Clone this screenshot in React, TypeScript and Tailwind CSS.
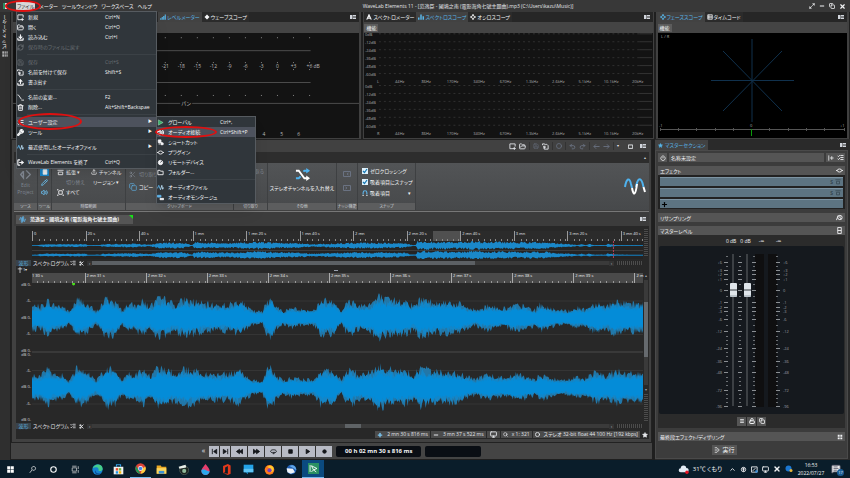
import React from "react";
import {
  AudioWaveform,
  ChevronUp,
  Circle,
  Copy,
  Download,
  FolderOpen,
  ListChecks,
  LockOpen,
  LogOut,
  Maximize2,
  MessageSquareText,
  Minus,
  Monitor,
  Pencil,
  Plus,
  Power,
  Redo2,
  RefreshCw,
  Save,
  Scissors,
  Search,
  Star,
  Trash2,
  Undo2,
  Upload,
  Volume2,
  Wrench,
  X,
} from "lucide-react";

type Point = [number, number];

// small seeded noise so that the wave looks the same on every render
function makeNoise(seed: number) {
  let s = seed;
  return () => {
    s = (s * 1103515245 + 12345) % 2147483648;
    return s / 2147483648;
  };
}

function levelAt(points: Point[], x: number) {
  for (let i = 1; i < points.length; i++) {
    if (x <= points[i][0]) {
      const [x0, y0] = points[i - 1];
      const [x1, y1] = points[i];
      return y0 + ((y1 - y0) * (x - x0)) / (x1 - x0 || 1);
    }
  }
  return points[points.length - 1][1];
}

function wavePath(points: Point[], center: number, seed: number, min: number, spread: number) {
  const rnd = makeNoise(seed);
  const top: string[] = [];
  const bottom: string[] = [];
  for (let x = 0; x <= 610; x++) {
    const a = levelAt(points, x);
    top.push(`${x},${(center - a * (min + rnd() * spread)).toFixed(1)}`);
    bottom.push(`${x},${(center + a * (min + rnd() * spread)).toFixed(1)}`);
  }
  return `M${top.join("L")}L${bottom.reverse().join("L")}Z`;
}

const mainLevels: Point[] = [
  [0, 12], [9, 12], [15, 18], [22, 13], [31, 12], [37, 6], [40, 10], [44, 19], [50, 17], [58, 12], [64, 6], [68, 12],
  [74, 20], [83, 17], [90, 7], [95, 14], [103, 13], [111, 17], [118, 12], [125, 19], [133, 19], [142, 14], [153, 19],
  [162, 17], [172, 14], [183, 13], [198, 14], [207, 18], [214, 11], [221, 7], [230, 6], [235, 19], [240, 20],
  [245, 10], [252, 7], [259, 10], [270, 8], [282, 8], [288, 18], [300, 17], [303, 15], [309, 6], [313, 14], [319, 18],
  [326, 13], [338, 15], [346, 22], [354, 18], [364, 18], [375, 17], [381, 12], [388, 20], [398, 17], [408, 16],
  [418, 16], [428, 14], [436, 10], [443, 8], [455, 13], [464, 10], [475, 10], [482, 13], [490, 12], [503, 8],
  [507, 14], [518, 9], [533, 7], [543, 10], [553, 9], [563, 16], [573, 12], [583, 17], [593, 14], [610, 15],
];

const overviewLevels: Point[] = [
  [0, 0.3], [6, 0.4], [8, 1.4], [54, 1.4], [56, 0.3], [68, 0.4], [70, 1.3], [100, 2], [118, 1], [128, 3], [150, 3],
  [158, 1], [160, 0.4], [162, 3.2], [200, 2.6], [225, 4], [240, 3], [270, 2.2], [280, 1.2], [297, 2], [330, 3],
  [372, 2.4], [380, 0.5], [383, 0.5], [385, 4.4], [420, 3.4], [440, 4.2], [480, 3.4], [510, 3.6], [525, 2], [540, 1.4],
  [545, 0.4], [548, 1.6], [553, 0.4], [556, 1.7], [561, 0.4], [573, 0.4], [575, 1.8], [584, 0.4], [610, 0.3],
];

const fileMenu: (null | { label: string; keys?: string; icon: React.ReactNode; off?: boolean; sub?: boolean; hot?: boolean })[] = [
  { label: "新規", keys: "Ctrl+N", icon: <NewIcon /> },
  { label: "開く", keys: "Ctrl+O", icon: <FolderOpen size={7} strokeWidth={3} /> },
  { label: "読み込む", keys: "Ctrl+I", icon: <Download size={7} strokeWidth={4} /> },
  { label: "保存時のファイルに戻す", icon: <RefreshCw size={7} strokeWidth={3} />, off: true },
  null,
  { label: "保存", keys: "Ctrl+S", icon: <Save size={7} strokeWidth={2} />, off: true },
  { label: "名前を付けて保存", keys: "Shift+S", icon: <SaveAsIcon /> },
  { label: "書き出す", icon: <Upload size={7} strokeWidth={4} /> },
  null,
  { label: "名前の変更...", keys: "F2", icon: <RenameIcon /> },
  { label: "削除...", keys: "Alt+Shift+Backspae", icon: <Trash2 size={7} strokeWidth={3} /> },
  null,
  { label: "ユーザー設定", icon: <ListChecks size={7} strokeWidth={3} />, sub: true, hot: true },
  { label: "ツール", icon: <Wrench size={7} strokeWidth={4} />, sub: true },
  null,
  { label: "最近使用したオーディオファイル", icon: <WaveIcon />, sub: true },
  null,
  { label: "WaveLab Elements を終了", keys: "Ctrl+Q", icon: <LogOut size={7} strokeWidth={4} /> },
];

const settingsMenu: typeof fileMenu = [
  { label: "グローバル", keys: "Ctrl+,", icon: <PlayIcon /> },
  { label: "オーディオ接続", keys: "Ctrl+Shift+P", icon: <Volume2 size={7} strokeWidth={4} />, hot: true },
  { label: "ショートカット", icon: <KeyIcon /> },
  { label: "プラグイン", icon: <PlugIcon /> },
  { label: "リモートデバイス", icon: <KnobIcon /> },
  { label: "フォルダー...", icon: <FolderIcon /> },
  null,
  { label: "オーディオファイル", icon: <WaveIcon /> },
  { label: "オーディオモンタージュ", icon: <MontageIcon /> },
];

function Svg({ size = 7, children, className = "" }: { size?: number; children: React.ReactNode; className?: string }) {
  return (
    <svg width={size} height={size} viewBox="0 0 16 16" fill="none" stroke="currentColor" strokeWidth="2" className={`shrink-0 ${className}`}>
      {children}
    </svg>
  );
}

function NewIcon() {
  return <Svg><path d="M9 13H2V2h12v6M12 9v7M8.500 12.500h7" /></Svg>;
}
function SaveAsIcon() {
  return <Svg><path d="M1 2h5l2 3M1 2v3M5 6v8h9V6l-3-3H8M3 7l4 4M7 7v4H3" /></Svg>;
}
function RenameIcon() {
  return <Svg><path d="M1 2l3 1 6 9M10 14h6" /></Svg>;
}
function WaveIcon() {
  return <Svg><path d="M1 10L4 3l4 10" stroke="#5fb4ea" /><path d="M8 13l3-10 2 9 2-4" stroke="#b9dcf2" /></Svg>;
}
function PlayIcon() {
  return <Svg><path d="M3 2l11 6-11 6z" fill="#3bb36a" stroke="#bfe8cf" strokeWidth="1" /></Svg>;
}
function KeyIcon() {
  return <Svg><path d="M3 2h6v6H3zM5 8v5M9 8l5 1v4H9z" fill="currentColor" /></Svg>;
}
function PlugIcon() {
  return <Svg><path d="M0 8h3M13 8h3" /><ellipse cx="8" cy="8" rx="5" ry="3.500" /></Svg>;
}
function KnobIcon() {
  return <Svg><circle cx="8" cy="8" r="5" fill="currentColor" /><path d="M8 8l5-6" stroke="#30363b" /></Svg>;
}
function FolderIcon() {
  return <Svg><path d="M2 13V3h5l1 2h6v8z" /></Svg>;
}
function MontageIcon() {
  return <Svg><path d="M1 3h8v4H1z" fill="#5fb4ea" stroke="#5fb4ea" /><path d="M7 10h8v3H7z" fill="currentColor" /></Svg>;
}
function BarsIcon() {
  return <Svg size={6}><path d="M2 15v-4M6 15V8M10 15V5M14 15V1" strokeWidth="3" /></Svg>;
}
function ScopeIcon() {
  return <Svg size={6}><path d="M8 0v5M8 11v5M0 8h5M11 8h5" strokeWidth="3" /><circle cx="8" cy="8" r="4" /></Svg>;
}
function DotIcon() {
  return <Svg size={6}><path d="M8 2v12M2 8h12" strokeWidth="3" /><circle cx="8" cy="8" r="4" fill="currentColor" /></Svg>;
}
function PeakIcon() {
  return <Svg size={6}><path d="M2 15L8 2l6 13M5 11h6" strokeWidth="3" /></Svg>;
}
function SpectrumIcon() {
  return <Svg size={6}><path d="M2 15V9M8 15V1M14 15V6" strokeWidth="4" /></Svg>;
}
function FilmIcon() {
  return <Svg size={6}><path d="M2 2h12v12H2zM2 6h12M2 10h12M5 2v12" /></Svg>;
}
function PanelMenuIcon() {
  return (
    <button aria-label="パネルメニュー" className="text-gray-300">
      <svg width="6" height="4" viewBox="0 0 12 8" fill="currentColor"><path d="M0 0h5v8H0zM6 0h6v2H6zM6 3h6v2H6zM6 6h6v2H6z" /></svg>
    </button>
  );
}

function Menu({ items, keyCol }: { items: typeof fileMenu; keyCol: string }) {
  return (
    <ul className="border border-[#565b60] bg-[#30363b] pb-px text-[5px] leading-[10px] text-gray-100 shadow-lg">
      {items.map((it, i) =>
        it === null ? (
          <li key={i} className="flex h-[5px] items-center pl-[10px]"><span className="h-px w-full bg-[#3b4146]" /></li>
        ) : (
          <li key={i}>
            <button className={`flex h-[10px] w-full items-center ${it.hot ? "bg-[#4d525d]" : ""} ${it.off ? "text-[#6a6f73]" : ""}`}>
              <span className="flex w-[11px] items-center justify-start">{it.icon}</span>
              <span className="flex-1 whitespace-nowrap text-left">{it.label}</span>
              <span className={`whitespace-nowrap text-left ${it.keys || !it.sub ? keyCol : ""}`}>{it.keys}</span>
              {it.sub && <span className="pr-1 text-[4px]">▶</span>}
            </button>
          </li>
        )
      )}
    </ul>
  );
}

function Tab({ icon, label, active }: { icon: React.ReactNode; label: string; active?: boolean }) {
  return (
    <button className={`flex h-[10px] items-center gap-px whitespace-nowrap px-[2px] ${active ? "bg-[#424242] text-[#58b5e8]" : "bg-[#2b2b2b] text-gray-100"}`}>
      {icon}
      {label}
    </button>
  );
}

function LevelMeter() {
  const marks = ["-21", "-18", "-15", "-12", "-9", "-6", "-3", "0", "+3"];
  return (
    <svg width="348" height="104" viewBox="13 34 348 104" className="block max-w-full" fontSize="5" fill="#bbb" textAnchor="middle">
      <path d="M16 51.500H312M16 83.500H312M13 104.500H181M193 104.500H361" stroke="#4c4c4c" />
      {marks.map((m, i) => {
        const x = 166 + i * 16.1;
        return (
          <g key={m}>
            <path d={`M${x} 38v1M${x} 63v1M${x} 70v1M${x} 96v1`} stroke="#888" />
            <text x={x} y="69">{m}</text>
          </g>
        );
      })}
      <path d="M311 38v1M311 63v1M311 70v1M311 96v1" stroke="#888" />
      <text x="308" y="69" textAnchor="start">+6 dB</text>
      <text x="187" y="106">パン</text>
      <text x="265" y="137">4</text>
      <text x="283" y="137">5</text>
      <text x="300" y="137">6</text>
    </svg>
  );
}

function Spectroscope() {
  const levels = ["0dB", "-12dB", "-24dB", "-36dB", "-48dB", "-60dB"];
  const freqs = ["44Hz", "86Hz", "170Hz", "340Hz", "670Hz", "1.3kHz", "2.6kHz", "5.1kHz", "10.1kHz", "20kHz"];
  return (
    <svg width="290" height="104" viewBox="365 34 290 104" className="block max-w-full" fontSize="4" fill="#aaa">
      {[34, 86].map((y, ch) => (
        <g key={y}>
          {levels.map((l, i) => (
            <g key={l}>
              <text x="366" y={y + 3 + i * 8}>{l}</text>
              <path d={`M380 ${y + i * 8 + 0.5}H642`} stroke="#303030" strokeDasharray="2 3" />
              <path d={`M642 ${y + i * 8 + 0.5}H655`} stroke="#333" />
            </g>
          ))}
          <text x="378" y={y + 50}>{ch ? "R" : "L"}</text>
          {freqs.map((f, i) => (
            <text key={f} x={401 + i * 26.6} y={y + 50} textAnchor="middle">{f}</text>
          ))}
        </g>
      ))}
    </svg>
  );
}

function Phasescope() {
  return (
    <svg width="188" height="104" viewBox="659 34 188 104" className="mx-auto block max-w-full bg-black" fontSize="4" fill="#aaa">
      <text x="662" y="39">L / R</text>
      <path d="M753 40v83M712 81.500h83M724 52l59 60M783 52l-59 60" stroke="#10314d" />
      <path d="M661 130.500h185M661.500 129v3M679.500 129v3M697.500 129v3M716.500 129v3M734.500 129v3M770.500 129v3M789.500 129v3M807.500 129v3M825.500 129v3M845.500 129v3" stroke="#555" />
      <path d="M752.500 130v7" stroke="#0a9a0a" />
      <text x="660" y="128">-1</text>
      <text x="751" y="128">0</text>
      <text x="841" y="128">+1</text>
    </svg>
  );
}

function Knurl({ vertical }: { vertical?: boolean }) {
  return vertical ? (
    <div className="h-[28px] w-[4px] bg-[repeating-linear-gradient(#4c4c4c_0_1px,#262626_1px_2px)]" />
  ) : (
    <div className="mr-[6px] h-[4px] w-[26px] bg-[repeating-linear-gradient(90deg,#4c4c4c_0_1px,#262626_1px_2px)]" />
  );
}

function ScrollRow({ children }: { children: React.ReactNode }) {
  return (
    <div className="flex h-[8px] shrink-0 items-center text-[5px] text-gray-200">
      <button className="h-[6px] w-[15px] bg-[#39434b] leading-[6px] text-[#58a7d8]">波形</button>
      <button className="w-[38px] whitespace-nowrap pl-[2px] leading-[6px]">スペクトログラム</button>
      <button aria-label="オプション" className="ml-[1px]"><ListChecks size={6} strokeWidth={3} /></button>
      <button aria-label="設定" className="ml-[3px] mr-[3px]"><Scissors size={5} strokeWidth={4} /></button>
      <button aria-label="左へ" className="h-[5px] w-[5px] bg-[#333] text-[4px] leading-[5px]">‹</button>
      <div className="flex h-[4px] flex-1 bg-[#3a3a3a]">{children}</div>
      <button aria-label="右へ" className="mr-[3px] h-[5px] w-[5px] bg-[#333] text-[4px] leading-[5px]">›</button>
      <Knurl />
    </div>
  );
}

function OverviewRuler() {
  const marks = ["0", "20 s", "40 s", "1 mn", "1 mn 20 s", "1 mn 40 s", "2 mn", "2 mn 20 s", "2 mn 40 s", "3 mn", "3 mn 20 s"];
  const ticks = "h-[2px] bg-[repeating-linear-gradient(90deg,transparent_0_9%,#888_9%_11%)]";
  return (
    <div className="flex h-[10px] bg-[linear-gradient(90deg,#2b2b2b_65.700%,#505050_65.700%_70%,#2b2b2b_70%)] text-[4px] leading-[6px] text-gray-200">
      {marks.map((m) => (
        <div key={m} className="flex w-[8.760%] shrink-0 flex-col justify-between border-l border-[#999] pl-px">
          <span className="whitespace-nowrap">{m}</span>
          <span className={ticks} />
        </div>
      ))}
      <div className="flex min-w-0 flex-1 flex-col justify-between border-l border-[#999] pl-px">
        <span className="whitespace-nowrap">3 mn 40 s</span>
        <span className="h-[2px] bg-[repeating-linear-gradient(90deg,transparent_0_4px,#888_4px_5px)]" />
      </div>
    </div>
  );
}

function TimeRuler() {
  const marks = ["31", "32", "33", "34", "35", "36", "37", "38", "39"];
  const ticks = "h-[2px] bg-[repeating-linear-gradient(90deg,transparent_0_9%,#999_9%_11%)]";
  return (
    <div className="flex h-[10px] shrink-0 bg-[#4a4a4a] text-[4px] leading-[6px] text-gray-100">
      <div className="flex w-[8.600%] shrink-0 flex-col justify-between">
        <span>1 30 s</span>
        <span className={ticks} />
      </div>
      {marks.map((m) => (
        <div key={m} className="flex w-[10%] shrink-0 flex-col justify-between border-l border-[#aaa] pl-px">
          <span className="whitespace-nowrap">2 mn {m} s</span>
          <span className={ticks} />
        </div>
      ))}
      <div className="min-w-0 flex-1 whitespace-nowrap border-l border-[#aaa] pl-px">2 m</div>
    </div>
  );
}

function Waves() {
  return (
    <svg viewBox="0 0 610 142" preserveAspectRatio="none" className="h-full w-full">
      <path d="M0 18.500H610M0 52.500H610M0 89.500H610M0 123.500H610" stroke="#353535" />
      <path d="M0 70.500H610" stroke="#4a4a4a" />
      {[35.5, 106.5].map((c, i) => (
        <g key={c}>
          <path d={wavePath(mainLevels, c, 7 + i * 31, 0.6, 0.62)} fill="#2277a8" />
          <path d={wavePath(mainLevels, c, 90 + i * 13, 0.55, 0.42)} fill="#1386c8" />
          <path d={wavePath(mainLevels, c, 51 + i * 17, 0.5, 0.25)} fill="#048cd8" />
        </g>
      ))}
      <circle cx="41.500" cy="1" r="1.500" fill="#4be11c" />
    </svg>
  );
}

function Ribbon() {
  const group = "flex shrink-0 flex-col border-r border-[#3e4042]";
  const caption = "mt-auto h-[7px] overflow-hidden whitespace-nowrap bg-[#5c5d5e] text-center text-[4px] leading-[7px] text-gray-300";
  return (
    <div className="flex h-[47px] shrink-0 bg-linear-to-b from-[#525456] to-[#47494b] text-[5px] leading-[8px] text-gray-100">
      <div className={`${group} w-[24px]`}>
        <button className="flex flex-col items-center pt-[6px] leading-[7px] text-gray-400/70">
          <Svg size={11}><path d="M5 3L1 8l4 5V3M9 2l6 6-6 6" /></Svg>
          <span className="mt-[2px]">Edit</span>
          <span>Project</span>
        </button>
        <div className={caption}>ソース</div>
      </div>
      <div className={`${group} w-[14px] items-center`}>
        <button aria-label="範囲選択" className="mt-[4px] flex h-[9px] w-[9px] items-center justify-center bg-[#1b86c9]"><Svg size={6}><path d="M3 2h10v12H3z" fill="currentColor" /></Svg></button>
        <button aria-label="ペンシル" className="mt-[1px] flex h-[10px] items-center text-[#6cc0f0]"><Pencil size={7} strokeWidth={3} /></button>
        <button aria-label="再生" className="flex h-[10px] items-center text-[#6cc0f0]"><Volume2 size={7} strokeWidth={3} /></button>
        <div className={`${caption} w-full`}>ツール</div>
      </div>
      <div className={`${group} w-[74px]`}>
        <div className="grid grid-cols-2 gap-y-[2px] pl-[5px] pt-[5px]">
          <button className="flex items-center gap-[2px]"><Svg><path d="M1 3h14M3 7h10v6H3z" /></Svg>拡張 ▾</button>
          <button className="flex items-center gap-[2px] whitespace-nowrap"><Upload size={6} strokeWidth={3} />チャンネル</button>
          <button className="pl-[9px] text-left text-gray-400/70">切り替え</button>
          <button className="whitespace-nowrap pl-[2px] text-left">リージョン ▾</button>
          <button className="flex items-center gap-[2px]"><Svg><path d="M4 4h8v8H4zM0 4V0h4M12 0h4v4M16 12v4h-4M4 16H0v-4" /></Svg>すべて</button>
        </div>
        <div className={caption}>時間範囲</div>
      </div>
      <div className={`${group} w-[108px] pl-[3px]`}>
        <button className="mt-[7px] flex items-center gap-[3px] text-gray-400/70"><Scissors size={7} />切り取り</button>
        <button className="mt-[5px] flex items-center gap-[2px]"><Copy size={8} className="text-[#5fb4ea]" />コピー</button>
        <div className={`${caption} -ml-[3px]`}>クリップボード</div>
      </div>
      <div className={`${group} w-[34px]`}>
        <button className="mt-[4px] self-end pr-[3px] text-gray-400/70">取る</button>
        <div className={caption}>切り取り</div>
      </div>
      <div className={`${group} w-[69px]`}>
        <button className="flex flex-col items-center pt-[4px]">
          <Svg size={15} className="text-white">
            <path d="M1 4h3l6 8h4" />
            <path d="M1 12h3l2-2M9 5l1-1h4" stroke="#4fb2ee" />
            <path d="M12 1l4 3-4 3z" fill="#4fb2ee" stroke="none" />
            <path d="M12 9l4 3-4 3z" fill="currentColor" stroke="none" />
          </Svg>
          <span className="mt-[2px] whitespace-nowrap">ステレオチャンネルを入れ替え</span>
        </button>
        <div className={caption}>その他</div>
      </div>
      <div className={`${group} w-[21px] items-center text-gray-500`}>
        <button aria-label="左にナッジ" className="mt-[7px]"><Svg size={8}><path d="M1 3h14v10H1zM11 6L8 8l3 2" /></Svg></button>
        <button aria-label="右にナッジ" className="mt-[6px]"><Svg size={8}><path d="M1 3h14v10H1zM5 6l3 2-3 2" /></Svg></button>
        <div className={`${caption} w-full`}>ナッジ機能</div>
      </div>
      <div className={`${group} w-[58px]`}>
        <div className="flex flex-col gap-[3px] pl-[4px] pt-[4px]">
          {["ゼロクロッシング", "吸着項目にスナップ"].map((t) => (
            <label key={t} className="flex items-center gap-[2px] whitespace-nowrap">
              <span className="grid">
                <input type="checkbox" defaultChecked className="peer col-start-1 row-start-1 h-[6px] w-[6px] appearance-none bg-[#dff1fb]" />
                <svg viewBox="0 0 12 12" className="pointer-events-none col-start-1 row-start-1 hidden h-[6px] w-[6px] peer-checked:block"><path d="M2 6l3 3 5-7" fill="none" stroke="#1879b4" strokeWidth="2.500" /></svg>
              </span>
              {t}
            </label>
          ))}
          <button className="flex items-center gap-[2px]">
            <Svg size={6} className="text-[#5fb4ea]"><path d="M3 12V7a5 5 0 0 1 10 0v5" strokeWidth="3" /><path d="M1 14.500h4M11 14.500h4" stroke="#fff" /></Svg>
            吸着項目
            <span className="ml-auto pr-[4px]">▾</span>
          </button>
        </div>
        <div className={caption}>スナップ</div>
      </div>
      <div className="flex flex-1 items-center justify-end pr-[3px]">
        <svg width="22" height="18" viewBox="0 0 22 18" fill="none" strokeWidth="2">
          <path d="M1 9C2.500 0 5.500 -1 7 6l1 4M12 9C13.500 0 16.500 -1 18.500 5l1 4" stroke="#4fb2ee" />
          <path d="M8 10c1.500 8 3.500 8 5-4M19.500 9l1.500 5" stroke="#fff" />
        </svg>
      </div>
    </div>
  );
}

function DbScale() {
  return (
    <div className="flex w-[16px] shrink-0 flex-col pr-px text-right text-[4px] leading-[4px] text-gray-300">
      {[0, 1].map((ch) => (
        <div key={ch} className="flex flex-1 flex-col justify-between">
          {["dB 0-", "-6-", "dB 0-", "-6-", "dB 0-"].map((t, i) => <span key={i}>{t}</span>)}
        </div>
      ))}
    </div>
  );
}

function AudioEditor() {
  return (
    <section className="flex flex-1 flex-col border border-[#222] bg-[#414141] px-[2px] pb-[3px]">
      <div className="flex h-[12px] items-center justify-end gap-[3px] pr-[3px] text-gray-200">
        <button aria-label="新規"><NewIcon /></button>
        <button aria-label="開く"><FolderOpen size={7} strokeWidth={3} /></button>
        <span className="h-[8px] w-px bg-[#333]" />
        <button aria-label="保存" className="text-gray-500"><Save size={6} /></button>
        <button aria-label="名前を付けて保存"><SaveAsIcon /></button>
        <span className="h-[8px] w-px bg-[#333]" />
        <button aria-label="情報" className="text-gray-500"><Circle size={6} strokeWidth={3} /></button>
        <span className="h-[8px] w-px bg-[#333]" />
        <button aria-label="元に戻す" className="text-gray-500"><Undo2 size={7} strokeWidth={3} /></button>
        <button aria-label="やり直す" className="text-gray-500"><Redo2 size={7} strokeWidth={3} /></button>
        <span className="h-[8px] w-px bg-[#333]" />
        <button aria-label="戻る" className="text-gray-500"><Svg><path d="M15 8H2M7 3L2 8l5 5" /></Svg></button>
        <button aria-label="進む" className="text-gray-500"><Svg><path d="M1 8h13M9 3l5 5-5 5" /></Svg></button>
        <span className="h-[8px] w-px bg-[#333]" />
        <span className="w-[8px] text-[4px] leading-[8px]">▾</span>
        <button aria-label="最大化" className="mr-[4px]"><Svg size={5}><path d="M1 3h14v11H1z" strokeWidth="3" /></Svg></button>
        <PanelMenuIcon />
      </div>
      <div className="flex h-[11px] items-center justify-end bg-[#2d2d2d] pr-[3px] text-[4px] text-gray-300">▴</div>
      <Ribbon />
      <div className="mt-[1px] flex h-[15px] shrink-0 items-center justify-between border-t border-[#777] bg-[#3c3c3c] pl-[2px] pr-[3px]">
        <button className="relative flex h-[9px] items-center gap-[4px] whitespace-nowrap bg-[#555] pl-[3px] pr-[14px] text-[5px] font-bold text-gray-100">
          <AudioWaveform size={7} strokeWidth={3} className="text-[#5fb4ea]" />
          范逸臣 - 國境之南 (電影海角七號主題曲)
          <span className="absolute right-0 top-0 border-l-4 border-t-4 border-l-transparent border-t-[#18e018]" />
        </button>
        <PanelMenuIcon />
      </div>
      <div className="ml-[2px] flex flex-1 flex-col bg-[#282828]">
        <div className="flex">
          <div className="w-[16px]" />
          <div className="flex-1 pt-[5px]">
            <OverviewRuler />
            <svg viewBox="0 0 610 18" preserveAspectRatio="none" className="h-[18px] w-full bg-[#242424]">
              <path d="M0 4.500H610M0 14.500H610" stroke="#155e8a" />
              <path d="M0 9.500H610" stroke="#3c3c3c" />
              <path d={wavePath(overviewLevels, 4.5, 5, 0.5, 0.6)} fill="#1a88c9" />
              <path d={wavePath(overviewLevels, 14, 19, 0.5, 0.6)} fill="#1a88c9" />
              <path d="M580.500 0V18" stroke="#b0405a" strokeDasharray="2 1" />
            </svg>
          </div>
          <div className="flex w-[6px] items-center justify-center"><Knurl vertical /></div>
        </div>
        <ScrollRow>
          <div className="w-[74%] bg-[#5c6064]" />
        </ScrollRow>
        <div className="flex h-[6px] shrink-0 items-center pl-[1px] pr-[4px] text-gray-200">
          <Svg size={6}><path d="M8 0v16M2 5h12" /></Svg>
          <span className="text-[4px] leading-[6px]">1▾</span>
          <span className="mx-auto h-px w-[4px] bg-gray-400" />
        </div>
        <div className="flex flex-1">
          <div className="flex flex-1 flex-col">
            <div className="pl-[16px]"><TimeRuler /></div>
            <div className="flex h-[138px] flex-auto">
              <DbScale />
              <div className="flex-1"><Waves /></div>
            </div>
          </div>
          <div className="flex w-[6px] flex-col items-center gap-[2px] text-[4px] leading-[5px] text-gray-400">
            <span>▴</span>
            <div className="flex w-[4px] flex-1 flex-col bg-[#3a3a3a] pt-[22px]"><div className="h-[55px] bg-[#666a6e]" /></div>
            <span>▾</span>
            <Knurl vertical />
          </div>
        </div>
        <ScrollRow>
          <div className="ml-[49%] w-[16px] bg-[#5f6366]" />
        </ScrollRow>
        <div className="flex h-[9px] shrink-0 items-center justify-end gap-px text-[5px] leading-[7px] text-gray-200">
          <span className="flex items-center gap-[4px] bg-[#4b4b4b] px-[2px]"><Plus size={6} strokeWidth={5} className="text-[#7cc9f5]" />2 mn 30 s 816 ms</span>
          <span className="flex items-center gap-[4px] bg-[#4b4b4b] px-[2px]"><Minus size={6} strokeWidth={4} />3 mn 37 s 522 ms</span>
          <span className="flex items-center bg-[#4b4b4b] px-[3px]"><Monitor size={7} strokeWidth={3} /></span>
          <span className="flex items-center gap-[4px] bg-[#4b4b4b] px-[2px]"><Search size={5} strokeWidth={3} />x 1: 321</span>
          <span className="flex items-center gap-[4px] bg-[#4b4b4b] px-[2px]"><Circle size={5} strokeWidth={4} />ステレオ 32-bit float 44 100 Hz [192 kbps]</span>
          <button aria-label="お気に入り" className="mx-px"><Star size={6} fill="currentColor" /></button>
        </div>
      </div>
    </section>
  );
}

function Transport() {
  const buttons: [string, string, string][] = [
    ["先頭へ", "w-[10px]", "M3 2v12M13 3L6 8l7 5z"],
    ["末尾へ", "w-[10px]", "M13 2v12M3 3l7 5-7 5z"],
    ["巻き戻し", "w-[16px]", "M8 3L1 8l7 5zM15 3L8 8l7 5z"],
    ["早送り", "w-[16px]", "M1 3l7 5-7 5zM8 3l7 5-7 5z"],
    ["ループ", "w-[16px]", "M5 11C-1 9 1 4 8 4s9 5 3 7M6 10h5l-3 4z"],
    ["停止", "w-[16px]", "M4 4h8v8H4z"],
    ["再生", "w-[16px]", "M5 3l8 5-8 5z"],
    ["録音", "w-[16px]", "M5 5l3-1 3 1 1 3-1 3-3 1-3-1-1-3z"],
  ];
  return (
    <div className="mb-px flex h-[16px] shrink-0 items-center justify-center gap-[4px] bg-[#444] pl-[20px]">
      <button aria-label="折りたたむ" className="text-[7px] leading-[8px] text-gray-200">«</button>
      <div className="flex gap-px bg-[#333]">
        {buttons.map(([label, w, d]) => (
          <button key={label} aria-label={label} className={`flex h-[11px] items-center justify-center bg-[#b8bbc5] text-[#14161a] ${w}`}>
            <Svg><path d={d} fill={label === "ループ" ? "none" : "currentColor"} /></Svg>
          </button>
        ))}
      </div>
      <output className="w-[85px] rounded-xs bg-[#0a0e14] text-center text-[6px] font-bold leading-[11px] text-gray-100">00 h 02 mn 30 s 816 ms</output>
      <output className="h-[11px] w-[56px] rounded-xs bg-[#0a0e14]" />
    </div>
  );
}

function Faders() {
  const scale: [string, number][] = [
    ["+6", 263], ["+3", 271], ["+2", 275], ["+1", 280], ["0", 291], ["-1", 303], ["-2", 308], ["-3", 312],
    ["-6", 320], ["-12", 332], ["-24", 349], ["-36", 362], ["-48", 373], ["-72", 391], ["-96", 407],
  ];
  const minor = [257, 267, 285, 297, 316, 326, 337, 341, 345, 353, 357, 367, 378, 382, 386, 395, 399, 403];
  return (
    <svg viewBox="660 249 184 166" className="mx-auto block h-[166px] max-w-full" fontSize="4" fill="#9a9fa3">
      <path d="M755 255h9v153h-9zM768 255h9v153h-9z" fill="#0f0f10" />
      <path d="M733 255v152M747 255v152" stroke="#3c4044" strokeWidth="2" />
      {scale.map(([t, y]) => (
        <g key={t}>
          <path d={`M724 ${y + 0.5}h4M738 ${y + 0.5}h4M752 ${y + 0.5}h4M776 ${y + 0.5}h4`} stroke="#8b8f93" />
          <text x="722" y={y + 2} textAnchor="end">{t}</text>
          <text x="783" y={y + 2}>{t}</text>
        </g>
      ))}
      {minor.map((y) => (
        <path key={y} d={`M726 ${y + 0.5}h2M739 ${y + 0.5}h2M753 ${y + 0.5}h2M776 ${y + 0.5}h2`} stroke="#6c7074" />
      ))}
      {[730, 744].map((x) => (
        <g key={x}>
          <rect x={x} y="284" width="7" height="14" rx="1" fill="#dfe5ea" />
          <path d={`M${x} 291h7`} stroke="#33383d" />
          <path d={`M${x} 297h7`} stroke="#98a4ad" />
        </g>
      ))}
    </svg>
  );
}

function MasterSection() {
  const header = "flex h-[9px] shrink-0 items-center justify-between bg-[#555] px-[2px] text-gray-100";
  const slot = "flex h-[9px] items-center justify-end gap-[2px] border-t border-[#7d94a3] bg-[#5d7482] pr-[2px] font-bold text-[#364650]";
  const smallButton = "flex h-[9px] w-[9px] items-center justify-center bg-[#555]";
  return (
    <aside className="ml-[3px] flex w-[195px] shrink-0 flex-col bg-[#2a2a2a] pb-px pr-[2px] text-[5px] leading-[8px]">
      <div className="flex h-[11px] items-end justify-between pr-[2px]">
        <button className="flex h-[10px] items-center gap-[2px] bg-[#424242] px-[3px] text-[#58b5e8]"><Star size={5} fill="currentColor" />マスターセクション</button>
        <span className="pb-[3px] leading-[4px]"><PanelMenuIcon /></span>
      </div>
      <div className="flex flex-1 flex-col gap-[4px] border border-[#4a4a4a] bg-[#3c3c3c] px-[2px] pt-[2px] text-gray-100">
        <div className="flex h-[9px] gap-[2px]">
          <button aria-label="電源" className="flex w-[9px] items-center justify-center bg-[#555]"><Power size={6} strokeWidth={3} /></button>
          <input aria-label="プリセット名" defaultValue="名称未設定" className="h-[9px] min-w-0 flex-1 bg-[#555] px-[2px]" />
          <button aria-label="オプション" className="flex w-[19px] items-center justify-around bg-[#555]"><Svg size={6}><path d="M2 1v14M5 8h10M10 3v10" /></Svg><ListChecks size={7} strokeWidth={3} /></button>
        </div>
        <div>
          <div className={header}>エフェクト<PlugIcon /></div>
          <div className="flex flex-col gap-[2px] bg-[#222] px-[2px] pb-px pt-[2px]">
            <div className={slot}><span>S</span><Svg size={6}><path d="M1 2h14M4 6h8v7H4z" /></Svg></div>
            <div className={slot}><span>S</span><Svg size={6}><path d="M1 2h14M4 6h8v7H4z" /></Svg></div>
            <button aria-label="エフェクトを追加" className="flex h-[9px] items-center border-t border-[#7d94a3] bg-[#5d7482] pl-[1px] text-black"><Plus size={7} strokeWidth={4} /></button>
          </div>
        </div>
        <div className={header}>リサンプリング<Svg><circle cx="9" cy="8" r="5" /><path d="M1 14L5 3M9 4v5l4 2" /></Svg></div>
        <div className="flex flex-1 flex-col">
          <div className={header}>マスターレベル<Svg><path d="M4 1h8v14H4zM4 8h8" /></Svg></div>
          <div className="flex flex-1 flex-col bg-[#2b2b2b] px-[1px]">
            <div className="flex h-[11px] items-center justify-center gap-[4px] pl-[8px]"><span>0 dB</span><span>0 dB</span><span className="px-[4px]">-∞</span><span className="px-[4px]">-∞</span></div>
            <div className="rounded-xs bg-[#15191e] pt-[2px]"><Faders /></div>
            <div className="flex h-[14px] items-center justify-center gap-px">
              <button aria-label="リスト" className={smallButton}><Svg size={6}><path d="M3 4h10M3 8h10M3 12h10" /></Svg></button>
              <button aria-label="ロック解除" className={smallButton}><LockOpen size={6} strokeWidth={4} /></button>
              <button aria-label="リンク" className={smallButton}><Copy size={6} strokeWidth={3} /></button>
            </div>
          </div>
        </div>
        <div className={header}>最終段エフェクト/ディザリング<Svg size={6}><path d="M2 2h5v5H2zM9 2h5v5H9zM2 9h5v5H2zM9 9h5v5H9z" fill="currentColor" stroke="none" /></Svg></div>
        <div className="flex h-[13px] justify-center pr-[54px]">
          <button className="flex h-[10px] items-center gap-[2px] bg-[#555] px-[2px] text-[6px]"><Svg size={6}><path d="M2 2h6l6 6-6 6H2M2 8h8" /></Svg>実行</button>
        </div>
      </div>
    </aside>
  );
}

const appIcons: [string, React.ReactNode][] = [
  ["スタート", <path d="M2 2h5.500v5.500H2zM8.500 2H14v5.500H8.500zM2 8.500h5.500V14H2zM8.500 8.500H14V14H8.500z" fill="#fff" />],
  ["検索", <path d="M3 14l4-5M10 2.500a3.500 3.500 0 1 0 .1 0z" fill="none" stroke="#fff" strokeWidth="1.300" />],
  ["Cortana", <circle cx="8" cy="8" r="5" fill="none" stroke="#fff" strokeWidth="2" />],
  ["タスクビュー", <path d="M2 5h8v6H2zM2 2h8M2 14h8M13 2v5M13 9v5" fill="none" stroke="#ddd" strokeWidth="1.300" />],
  ["Edge", <g><circle cx="8" cy="8" r="7.500" fill="#1684d0" /><path d="M1 6C4-1 15-1 15.500 7c0 4-6 4-6 2 1-5-5-5-8.500-3z" fill="#46ce8a" /><path d="M5 9c0 4 4 6 9 4-5 5-12 1-9-4z" fill="#0d4c91" /></g>],
  ["Store", <g><path d="M1 4h14v11H1z" fill="#f2f2f2" /><path d="M5 4V1h6v3" fill="none" stroke="#36a3e8" strokeWidth="1.500" /><path d="M4 6h3.500v3.500H4z" fill="#e84b2a" /><path d="M8.500 6H12v3.500H8.500z" fill="#6db33f" /><path d="M4 10.500h3.500V14H4z" fill="#2196e3" /><path d="M8.500 10.500H12V14H8.500z" fill="#f8b700" /></g>],
  ["Chrome", <g><circle cx="8" cy="8" r="7.500" fill="#dc4437" /><path d="M1.500 4.500L8 15.500A7.500 7.500 0 0 1 1.500 4.500z" fill="#179c58" /><path d="M15 5a7.500 7.500 0 0 1-7 10.500L11 8z" fill="#fcd03f" /><circle cx="8" cy="8" r="3.500" fill="#fff" /><circle cx="8" cy="8" r="2.600" fill="#4387ea" /></g>],
  ["エクスプローラー", <g><path d="M1 2h6l1 2h7v10H1z" fill="#e9a823" /><path d="M1 6h14v8H1z" fill="#fbd65f" /><path d="M4 10h8v4H4z" fill="#3d91d4" /></g>],
  ["ビデオ", <g><circle cx="9" cy="9" r="6.500" fill="#1b2420" stroke="#56635a" /><path d="M1 4l10-3 1 4-10 2z" fill="#e8eee8" /><circle cx="9" cy="10" r="3" fill="#8fb89a" /></g>],
  ["ペイント", <g><path d="M8 0c4 5 6 7 6 10a6 6 0 0 1-12 0C2 7 5 4 8 0z" fill="#e63e6d" /><path d="M2 9c4-4 8 3 12 1a6 6 0 0 1-12 0z" fill="#2aa8ed" /></g>],
  ["Office", <path d="M3 3l7-3 4 2v12l-4 2-7-3 7 1V3L6 5v7l-3 1z" fill="#e2391b" />],
  ["ブラウザー", <g><path d="M1 1h14v11H1z" fill="#23a3e8" /><path d="M1 7h14v5H1z" fill="#5ec4f5" /><path d="M4 12h3v3z" fill="#23a3e8" /></g>],
  ["Firefox", <g><circle cx="8" cy="8.500" r="7" fill="#ff7a1a" /><path d="M3 3c3 2 5-3 10 1 3 5-1 9-5 8 5-1 3-5 0-6z" fill="#ffcb2e" /><circle cx="8" cy="9" r="3" fill="#7a3fc0" /></g>],
  ["Thunderbird", <g><circle cx="8" cy="8" r="7" fill="#1f5fb4" /><path d="M1 6l9 1 3 5-6 2-5-2z" fill="#eef3f8" /><path d="M5 3c5-3 10 1 10 6l-4-3z" fill="#63a9e8" /></g>],
  ["WaveLab", <g><path d="M0 0h16v16H0z" fill="#2a9063" /><path d="M5 4l8 4-5 2zM3 3v10M5 13l3-3 4 3" fill="none" stroke="#fff" strokeWidth="1.300" /></g>],
];

function Taskbar() {
  return (
    <footer className="flex h-[18px] shrink-0 items-center justify-between bg-[#0a1d2a] text-[6px] text-gray-100">
      <nav className="flex h-full w-[324px]">
        {appIcons.map(([label, art]) => (
          <button key={label} aria-label={label} className={`flex h-full flex-1 items-center justify-center ${label === "WaveLab" ? "border-b border-[#76b9ed] bg-[#0b4a7f]" : label === "Chrome" ? "border-b border-[#76b9ed]" : ""}`}>
            <svg width="11" height="11" viewBox={/^(スタート|検索|Cortana|タスクビュー)$/.test(label) ? "-2 -2 20 20" : "0 0 16 16"}>{art}</svg>
          </button>
        ))}
      </nav>
      <div className="flex items-center">
        <div className="flex items-center gap-[4px]">
          <Svg size={11}>
            <path d="M4 12a3 3 0 0 1 0-6 4 4 0 0 1 8 0 3 3 0 0 1 1 6z" fill="#e4ebf4" stroke="none" />
            <circle cx="13" cy="12" r="2.500" fill="#e81123" stroke="none" />
          </Svg>
          <span className="whitespace-nowrap">31℃ くもり</span>
          <ChevronUp size={7} strokeWidth={3} className="ml-[3px]" />
          <Svg><circle cx="8" cy="8" r="5" /><path d="M5 7h6M8 4v9" /></Svg>
          <Svg><path d="M1 2h13v12H1zM4 11l6-6" /><path d="M10 10h5v5h-5z" fill="#2f8ee0" stroke="none" /></Svg>
          <Monitor size={7} strokeWidth={3} />
          <X size={8} strokeWidth={4} />
          <Svg size={8}><circle cx="7" cy="7" r="6" fill="#1b77d2" stroke="none" /><circle cx="12" cy="11" r="3" fill="#e7b63a" stroke="none" /></Svg>
        </div>
        <div className="ml-[2px] w-[32px] text-center text-[5px] leading-[8px]">
          <div>16:53</div>
          <div>2022/07/27</div>
        </div>
        <button aria-label="通知" className="relative ml-[4px] mr-[9px]">
          <MessageSquareText size={10} fill="#eee" stroke="#556" />
          <span className="absolute -bottom-[2px] -right-[3px] h-[7px] w-[7px] rounded-full bg-[#1a5c94] text-center text-[4px] leading-[7px]">17</span>
        </button>
      </div>
    </footer>
  );
}

export default function App() {
  const panelTabs = "flex h-[10px] items-center bg-[#262626] pr-[3px]";
  const tool = "flex h-[11px] items-center bg-[#444]";
  const ring = "pointer-events-none absolute rounded-[50%] border-2 border-[#e01010]";
  return (
    <div className="flex min-h-screen flex-col bg-[#1f1f1f] font-['Open_Sans','Noto_Sans_CJK_JP',sans-serif] text-[5px] leading-[8px] text-gray-100 [font-feature-settings:'palt']">
      <header className="relative flex h-[12px] shrink-0 items-center bg-[#383838]">
        <span className="ml-[3px] mr-[9px] h-[6px] w-[4px] border-l-2 border-[#2a9063] bg-gray-200" />
        <nav className="flex flex-1 gap-[4px] whitespace-nowrap">
          <div className="relative">
            <button className="h-[8px] bg-[#d8d8d8] px-px text-[#333]">ファイル</button>
            <div className="absolute left-0 top-[9px] z-10 w-[141px]">
              <Menu items={fileMenu} keyCol="w-[51px]" />
              <div className="absolute left-[140px] top-[105px] w-[100px]">
                <Menu items={settingsMenu} keyCol="w-[35px]" />
                <span className={`${ring} -left-[1px] top-[10px] h-[12px] w-[62px]`} />
              </div>
              <span className={`${ring} left-[2px] top-[102px] h-[17px] w-[64px]`} />
            </div>
            <span className={`${ring} -left-[11px] -top-[2px] z-20 h-[12px] w-[36px]`} />
          </div>
          <button>メーター</button>
          <button>ツールウィンドウ</button>
          <button>ワークスペース</button>
          <button>ヘルプ</button>
        </nav>
        <h1 className="whitespace-nowrap pl-[74px] text-[5px] text-gray-200">WaveLab Elements 11 - [范逸臣 - 國境之南 (電影海角七號主題曲).mp3 (C:\Users\kazu\Music)]</h1>
        <div className="flex flex-1 justify-end gap-[4px] pr-[4px]">
          <button aria-label="全画面"><Maximize2 size={6} strokeWidth={3} /></button>
          <button aria-label="最小化"><Minus size={6} strokeWidth={4} /></button>
          <button aria-label="元のサイズ"><Copy size={6} strokeWidth={3} /></button>
          <button aria-label="閉じる"><X size={7} strokeWidth={4} /></button>
        </div>
      </header>

      <div className="flex flex-1">
        <div className="mr-[1px] flex w-[10px] shrink-0 items-start justify-center bg-[#2f2f2f] pt-[2px]">
          <button className="flex rotate-180 items-center gap-[2px] whitespace-nowrap leading-[8px] [writing-mode:vertical-rl]">
            <Svg size={6}><path d="M1 3h3M6 3h3M11 3h4M1 8h3M6 8h3M11 8h4M1 13h3M6 13h3M11 13h4" strokeWidth="3" /></Svg>
            ビットメーター
          </button>
        </div>
        <div className="flex min-w-0 flex-1 flex-col">
          <div className="flex h-[127px] shrink-0 gap-[2px]">
            <section className="min-w-0 flex-[351] border-x-2 border-b border-[#404040] bg-[#131313]">
              <div className={`${panelTabs} pl-[145px]`}>
                <Tab icon={<BarsIcon />} label="レベルメーター" active />
                <Tab icon={<DotIcon />} label="ウェーブスコープ" />
                <span className="ml-auto leading-[4px]"><PanelMenuIcon /></span>
              </div>
              <div className={tool} />
              <LevelMeter />
            </section>
            <section className="min-w-0 flex-[292] border-x border-b border-[#404040] bg-[#131313]">
              <div className={panelTabs}>
                <Tab icon={<PeakIcon />} label="スペクトロメーター" />
                <Tab icon={<SpectrumIcon />} label="スペクトロスコープ" active />
                <Tab icon={<ScopeIcon />} label="オシロスコープ" />
                <span className="ml-auto leading-[4px]"><PanelMenuIcon /></span>
              </div>
              <div className={tool}><button className="bg-[#5c5c5c] px-[2px]">機能</button></div>
              <Spectroscope />
            </section>
            <section className="mr-[1px] min-w-0 flex-[192] border-x-2 border-b border-[#404040] bg-black">
              <div className={panelTabs}>
                <Tab icon={<ScopeIcon />} label="フェーズスコープ" active />
                <Tab icon={<FilmIcon />} label="タイムコード" />
                <span className="ml-auto leading-[4px]"><PanelMenuIcon /></span>
              </div>
              <div className={tool}><button className="bg-[#5c5c5c] px-[2px]">機能</button></div>
              <Phasescope />
            </section>
          </div>
          <div className="flex flex-1">
            <main className="flex min-w-0 flex-1 flex-col">
              <AudioEditor />
              <Transport />
            </main>
            <MasterSection />
          </div>
        </div>
      </div>
      <Taskbar />
    </div>
  );
}
